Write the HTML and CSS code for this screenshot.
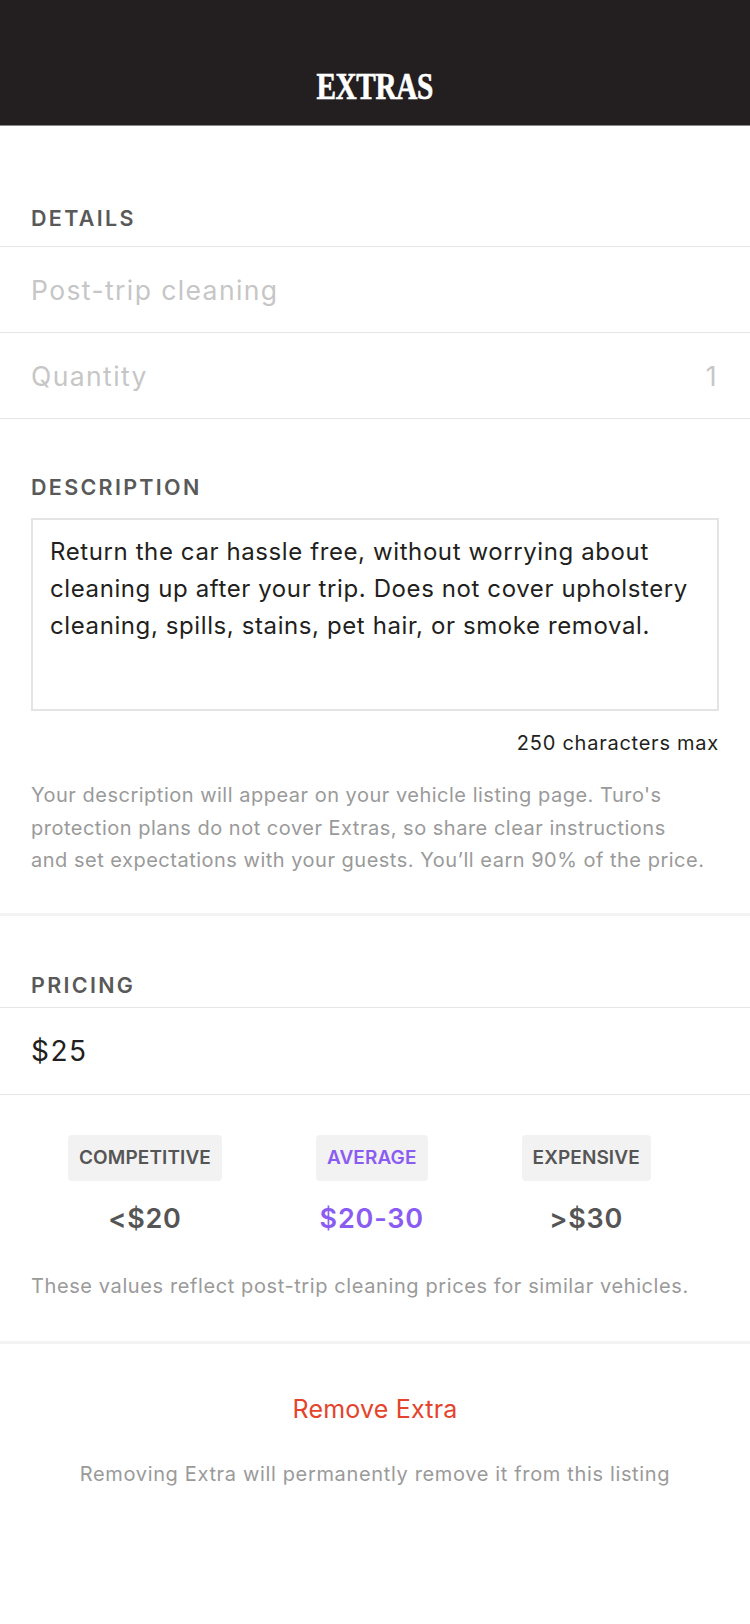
FILE: index.html
```html
<!DOCTYPE html>
<html lang="en">
<head>
<meta charset="utf-8">
<title>Extras</title>
<link rel="stylesheet" href="styles.css">
</head>
<body>
<header class="topbar">
  <h1 class="title">EXTRAS</h1>
</header>

<main>
  <section class="details">
    <div class="label label-details">DETAILS</div>
    <div class="row"><span class="placeholder">Post-trip cleaning</span></div>
    <div class="row"><span class="placeholder">Quantity</span><span class="placeholder">1</span></div>
  </section>

  <section class="description">
    <div class="label label-desc">DESCRIPTION</div>
    <div class="textbox">Return the car hassle free, without worrying about cleaning up after your trip. Does not cover upholstery cleaning, spills, stains, pet hair, or smoke removal.</div>
    <div class="charmax">250 characters max</div>
    <p class="helper helper-desc">Your description will appear on your vehicle listing page. Turo's protection plans do not cover Extras, so share clear instructions<br>and set expectations with your guests. You’ll earn 90% of the price.</p>
  </section>

  <section class="pricing">
    <div class="label label-pricing">PRICING</div>
    <div class="row price-row"><span class="price">$25</span></div>
    <div class="tiers">
      <div class="tier">
        <span class="badge">COMPETITIVE</span>
        <span class="tier-value">&lt;$20</span>
      </div>
      <div class="tier tier-active">
        <span class="badge">AVERAGE</span>
        <span class="tier-value">$20-30</span>
      </div>
      <div class="tier">
        <span class="badge">EXPENSIVE</span>
        <span class="tier-value">&gt;$30</span>
      </div>
    </div>
    <p class="helper note">These values reflect post-trip cleaning prices for similar vehicles.</p>
  </section>

  <section class="remove">
    <div class="remove-link">Remove Extra</div>
    <p class="remove-note">Removing Extra will permanently remove it from this listing</p>
  </section>
</main>
</body>
</html>
```

FILE: styles.css
```css
* { box-sizing: border-box; }

html, body {
  margin: 0;
  padding: 0;
  background: #ffffff;
}

body {
  font-family: Inter, "Noto Sans", sans-serif;
  color: #231f20;
  width: 750px;
}

.topbar {
  height: 126px;
  background: #231f20;
  border-bottom: 1px solid #8a8a8a;
  display: flex;
  align-items: center;
  justify-content: center;
  padding-top: 46px;
}

.title {
  margin: 0;
  font-family: "Liberation Serif", "Times New Roman", serif;
  font-weight: 700;
  font-size: 38px;
  line-height: 38px;
  color: #ffffff;
  transform: scaleX(0.77);
  letter-spacing: -0.5px;
  -webkit-text-stroke: 0.7px #ffffff;
}

.label {
  font-size: 21.5px;
  font-weight: 600;
  letter-spacing: 2.3px;
  color: #595959;
  line-height: 24px;
  padding: 0 31px;
}

.label-details {
  margin-top: 80px;
  padding-bottom: 16px;
  border-bottom: 1px solid #e6e6e6;
}

.row {
  height: 86px;
  display: flex;
  align-items: center;
  justify-content: space-between;
  padding: 0 32px 0 31px;
  border-bottom: 1px solid #e6e6e6;
}

.placeholder {
  font-size: 26.5px;
  letter-spacing: 1.4px;
  color: #c6c6c6;
}

.label-desc {
  margin-top: 56px;
}

.textbox {
  margin: 19px 31px 0;
  height: 193px;
  border: 2px solid #e4e4e4;
  padding: 13px 8px 13px 17px;
  font-size: 24px;
  letter-spacing: 0.6px;
  line-height: 37px;
  color: #231f20;
}

.charmax {
  margin: 20px 31px 0;
  text-align: right;
  font-size: 20px;
  letter-spacing: 0.75px;
  line-height: 24px;
  color: #231f20;
}

.helper {
  margin: 24px 31px 0;
  font-size: 20px;
  line-height: 32.5px;
  color: #9a9a9a;
}

.helper-desc {
  letter-spacing: 0.5px;
}

.description {
  padding-bottom: 36px;
  border-bottom: 3px solid #f3f3f3;
}

.label-pricing {
  margin-top: 57px;
  padding-bottom: 10px;
  border-bottom: 1px solid #e6e6e6;
}

.price-row {
  height: 87px;
}

.price {
  font-size: 28px;
  letter-spacing: 1.5px;
  color: #231f20;
}

.tiers {
  display: flex;
  gap: 94px;
  padding-left: 68px;
  margin-top: 40px;
}

.tier {
  display: flex;
  flex-direction: column;
  align-items: center;
  gap: 21px;
}

.badge {
  display: block;
  height: 46px;
  line-height: 46px;
  padding: 0 11px;
  background: #f2f2f2;
  border-radius: 4px;
  font-size: 19px;
  font-weight: 600;
  letter-spacing: 0.1px;
  color: #555555;
}

.tier-value {
  font-size: 27px;
  font-weight: 600;
  letter-spacing: 0.8px;
  line-height: 34px;
  color: #555555;
}

.tier-active .badge,
.tier-active .tier-value {
  color: #8b5cf2;
}

.note {
  margin-top: 34px;
  letter-spacing: 0.6px;
}

.pricing {
  padding-bottom: 39px;
  border-bottom: 3px solid #f3f3f3;
}

.remove {
  text-align: center;
}

.remove-link {
  margin-top: 50px;
  font-size: 25px;
  letter-spacing: 0.2px;
  line-height: 30px;
  color: #e5432b;
}

.remove-note {
  margin: 37px 0 0;
  font-size: 20px;
  letter-spacing: 0.65px;
  line-height: 26px;
  color: #9a9a9a;
}
```
